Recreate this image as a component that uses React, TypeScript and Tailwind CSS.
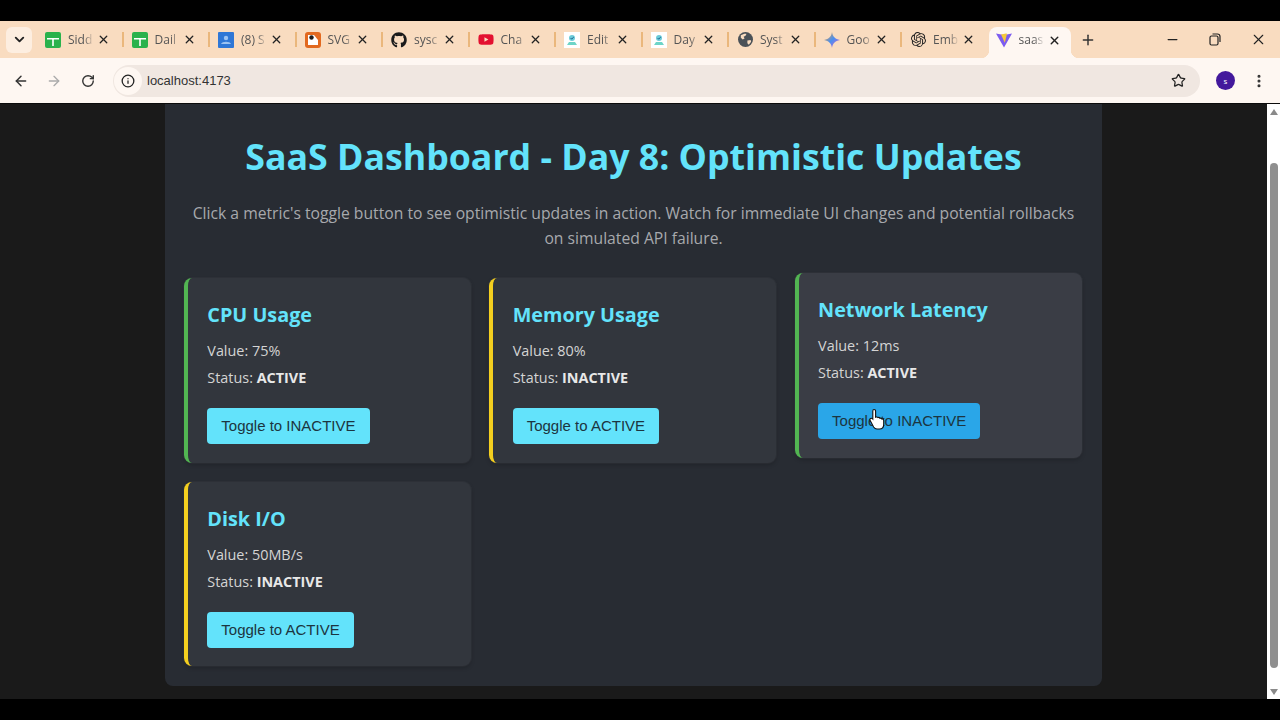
import {
  ArrowLeft,
  ArrowRight,
  ChevronDown,
  Info,
  Minus,
  MoreVertical,
  Plus,
  RotateCw,
  Star,
  X,
} from "lucide-react";
import { FaGithub, FaYoutube } from "react-icons/fa";
import { SiOpenai } from "react-icons/si";
import type { ReactNode } from "react";

function Sheets() {
  return (
    <svg width="16" height="16" viewBox="0 0 16 16">
      <rect width="16" height="16" rx="2" fill="#2ab24c" />
      <path d="M2 6h12v1.6H8.8V14H7.2V7.6H2z" fill="#fff" />
    </svg>
  );
}

function Blue() {
  return (
    <svg width="16" height="16" viewBox="0 0 16 16">
      <rect width="16" height="16" rx="1" fill="#2f77d6" />
      <circle cx="8" cy="6" r="2.2" fill="#9cc3f2" />
      <path d="M3 12c1-3 9-3 10 0z" fill="#9cc3f2" />
    </svg>
  );
}

function Svgo() {
  return (
    <svg width="16" height="16" viewBox="0 0 16 16">
      <rect width="16" height="16" rx="3" fill="#e2691f" />
      <path d="M3 3h6l4 5v5H3z" fill="#fff" />
      <circle cx="6.5" cy="5.5" r="2.2" fill="#1d1d1d" />
    </svg>
  );
}

function Doc() {
  return (
    <svg width="16" height="16" viewBox="0 0 16 16">
      <rect width="16" height="16" fill="#fff" />
      <circle cx="8" cy="6" r="3" fill="#6ccbd8" />
      <path d="M6.6 6l1.1 1.1L9.8 5" stroke="#1f5f8f" strokeWidth="1" fill="none" />
      <path d="M3 13l2-3h6l2 3z" fill="#6ed5c8" />
    </svg>
  );
}

function Earth() {
  return (
    <svg width="15" height="15" viewBox="0 0 16 16">
      <circle cx="8" cy="8" r="8" fill="#4b5157" />
      <path d="M3 3.5c2-1.5 5-2 6-1.5l-1 2-2 1 1 2-2 1-2-2zM10 9l3.5-.5.5 2-2.5 3-1.5-1.5z" fill="#f9dcc0" />
    </svg>
  );
}

function Gemini() {
  return (
    <svg width="16" height="16" viewBox="0 0 16 16">
      <defs>
        <linearGradient id="gem" x1="0" y1="0" x2="1" y2="1">
          <stop offset="0" stopColor="#f0a030" />
          <stop offset="0.5" stopColor="#4a8ff0" />
          <stop offset="1" stopColor="#d85ad0" />
        </linearGradient>
      </defs>
      <path d="M8 0c.6 4.4 3 7.2 8 8-5 .8-7.4 3.6-8 8-.6-4.4-3-7.2-8-8 5-.8 7.4-3.6 8-8z" fill="url(#gem)" />
    </svg>
  );
}

function Vite() {
  return (
    <svg width="16" height="16" viewBox="0 0 16 16">
      <path d="M0 1.5l8 1.4 8-1.4L8 15.5z" fill="#7c5cf0" />
      <path d="M5 2.5l5-.9 1 .2-2.2 9z" fill="#f5c83a" />
    </svg>
  );
}

function Restore() {
  return (
    <svg width="12" height="13" viewBox="0 0 12 13" fill="none" stroke="#222" strokeWidth="1.2">
      <rect x="1" y="3" width="8" height="9" rx="1.5" />
      <path d="M3.5 1h5A2.5 2.5 0 0 1 11 3.5V9" />
    </svg>
  );
}

const tabs: { icon: ReactNode; label: string }[] = [
  { icon: <Sheets />, label: "Sidd" },
  { icon: <Sheets />, label: "Dail" },
  { icon: <Blue />, label: "(8) S" },
  { icon: <Svgo />, label: "SVG" },
  { icon: <FaGithub size={16} color="#1b1b1b" />, label: "sysc" },
  { icon: <FaYoutube size={17} color="#e3102f" />, label: "Cha" },
  { icon: <Doc />, label: "Edit" },
  { icon: <Doc />, label: "Day" },
  { icon: <Earth />, label: "Syst" },
  { icon: <Gemini />, label: "Goo" },
  { icon: <SiOpenai size={15} color="#222" />, label: "Emb" },
];

const metrics = [
  { name: "CPU Usage", value: "75%", status: "ACTIVE", next: "INACTIVE" },
  { name: "Memory Usage", value: "80%", status: "INACTIVE", next: "ACTIVE" },
  { name: "Network Latency", value: "12ms", status: "ACTIVE", next: "INACTIVE", hover: true },
  { name: "Disk I/O", value: "50MB/s", status: "INACTIVE", next: "ACTIVE" },
];

function Tab({ icon, label, last }: { icon: ReactNode; label: string; last: boolean }) {
  return (
    <div className="flex h-[37px] w-[86.5px] shrink-0 items-center pl-2">
      <div className="flex w-4 shrink-0 justify-center">{icon}</div>
      <span className="ml-[7px] w-[26px] shrink-0 whitespace-nowrap text-[12px] text-[#555] [mask-image:linear-gradient(to_right,black_60%,transparent)]">
        {label}
      </span>
      <X size={13} strokeWidth={2.4} className="ml-[2.5px] shrink-0 text-[#222]" />
      {!last && <div className="ml-[12px] h-[15px] w-[2px] shrink-0 bg-[#eab77c]" />}
    </div>
  );
}

function MetricCard({ metric }: { metric: (typeof metrics)[number] }) {
  const active = metric.status === "ACTIVE";
  return (
    <div
      className={`rounded-lg border-l-[4px] pb-[18.4px] pl-[19.3px] pr-[19px] pt-[20px] shadow-[0_0_0_1px_rgba(255,255,255,0.03),0_2px_4px_rgba(0,0,0,0.2)] ${
        active ? "border-[#52b552]" : "border-[#f4cf1f]"
      } ${metric.hover ? "-translate-y-[5px] bg-[#3a3d45]" : "bg-[#32363d]"}`}
    >
      <h3 className="text-[19.8px] font-bold leading-[33px] text-[#63e3fb]">{metric.name}</h3>
      <p className="mt-[8px] text-[14.4px] leading-[23px] text-[#d4d4d4]">Value: {metric.value}</p>
      <p className="mt-[4px] text-[14.4px] leading-[23px] text-[#d4d4d4]">
        Status: <strong className="font-bold text-[#e8e8e8]">{metric.status}</strong>
      </p>
      <button
        className={`mt-[19px] block h-[36px] rounded px-[14px] font-['Liberation_Sans',sans-serif] text-[15px] text-[#1c3540] ${
          metric.hover ? "bg-[#2aa6e8]" : "bg-[#63e3fb]"
        }`}
      >
        Toggle to {metric.next}
      </button>
    </div>
  );
}

export default function App() {
  return (
    <div className="flex h-[720px] w-[1280px] flex-col overflow-hidden bg-black font-['Open_Sans',sans-serif]">
      <div className="mt-[21px] flex h-[37px] shrink-0 items-center bg-[#f9dcc0]">
        <div className="ml-[6px] mr-[5px] flex h-[26px] w-[26px] items-center justify-center rounded-md bg-[#fdeee0]">
          <ChevronDown size={15} strokeWidth={3} className="text-[#222]" />
        </div>
        {tabs.map((tab, i) => (
          <Tab key={i} icon={tab.icon} label={tab.label} last={i === tabs.length - 1} />
        ))}
        <div className="relative flex h-[31px] w-[82px] shrink-0 items-center self-end rounded-t-lg bg-[#fef7f2] pb-[5px] pl-[7px]">
          <div className="absolute -left-2 bottom-0 h-2 w-2 bg-[radial-gradient(circle_at_0_0,transparent_8px,#fef7f2_8.5px)]" />
          <div className="absolute -right-2 bottom-0 h-2 w-2 bg-[radial-gradient(circle_at_100%_0,transparent_8px,#fef7f2_8.5px)]" />
          <Vite />
          <span className="ml-[7px] w-[26px] whitespace-nowrap text-[12px] text-[#555] [mask-image:linear-gradient(to_right,black_55%,transparent)]">
            saas
          </span>
          <X size={13} strokeWidth={2.6} className="ml-[3px] text-[#222]" />
        </div>
        <Plus size={16} strokeWidth={2.2} className="ml-[9px] text-[#333]" />
        <Minus size={15} className="ml-[69px] text-[#222]" />
        <div className="ml-[29px]">
          <Restore />
        </div>
        <X size={17} strokeWidth={1.6} className="ml-[29px] text-[#222]" />
      </div>

      <div className="flex h-[45px] shrink-0 items-center bg-[#fef7f2]">
        <ArrowLeft size={16} strokeWidth={2.2} className="ml-[13px] text-[#333]" />
        <ArrowRight size={16} strokeWidth={2} className="ml-[17px] text-[#aaa]" />
        <RotateCw size={14} strokeWidth={2.4} className="ml-[19px] text-[#333]" />
        <div className="ml-[18px] flex h-[32px] w-[1087px] items-center rounded-full bg-[#f0e7e1]">
          <div className="ml-[1px] flex h-[28px] w-[28px] items-center justify-center rounded-full bg-[#fef7f2]">
            <Info size={14} strokeWidth={2.2} className="text-[#222]" />
          </div>
          <span className="ml-[5px] font-['Liberation_Sans',sans-serif] text-[13px] text-[#333]">localhost:4173</span>
          <Star size={15} strokeWidth={2} className="ml-auto mr-[14px] text-[#222]" />
        </div>
        <div className="ml-[16px] flex h-[19px] w-[19px] items-center justify-center rounded-full bg-[#43189c] text-[8px] text-white">
          s
        </div>
        <MoreVertical size={16} strokeWidth={2.6} className="ml-[16px] text-[#333]" />
      </div>

      <div className="flex h-[596px] shrink-0 border-t border-[#0c0c0c] bg-[#1a1a1a]">
        <div className="relative min-w-0 flex-1">
          <div className="mx-auto h-[582px] w-[937px] rounded-b-lg bg-[#282c33] px-[19px]">
            <h1 className="pt-[27px] text-center text-[35.7px] font-bold leading-[50px] text-[#63e3fb]">
              SaaS Dashboard - Day 8: Optimistic Updates
            </h1>
            <p className="mx-auto mt-[20px] w-[899px] text-center text-[15.7px] leading-[25.2px] text-[#a7a9ad]">
              Click a metric&apos;s toggle button to see optimistic updates in action. Watch for immediate UI changes and potential rollbacks on simulated API failure.
            </p>
            <div className="mt-[27px] grid grid-cols-[repeat(3,287px)] gap-x-[18.4px] gap-y-[19.2px]">
              {metrics.map((m) => (
                <MetricCard key={m.name} metric={m} />
              ))}
            </div>
          </div>
          {/* mouse pointer over the hovered button */}
          <svg className="absolute left-[869px] top-[304px]" width="17" height="22" viewBox="0 0 17 22">
            <path
              d="M5 1.5c1 0 1.6.7 1.6 1.7v6l.8-.2c.8-.2 1.4.2 1.7.6.7-.3 1.5 0 1.8.6.8-.3 1.6.1 1.9.8.9-.2 1.9.4 1.9 1.6v3.6c0 2.6-1.6 4.8-4.2 4.8H8c-1.6 0-2.6-.8-3.4-2L1.2 12.6c-.5-.8-.3-1.7.4-2.1.7-.4 1.4-.2 2 .4l.2.2V3.2c0-1 .4-1.7 1.2-1.7z"
              fill="#fff"
              stroke="#111"
              strokeWidth="1.1"
            />
          </svg>
        </div>
        <div className="flex w-[13px] shrink-0 flex-col items-center bg-white">
          <div className="mt-[5px] h-0 w-0 border-x-[4.5px] border-b-[6px] border-x-transparent border-b-[#8a8a8a]" />
          <div className="mt-[48px] h-[505px] w-[8px] rounded-full bg-[#8f8f8f]" />
          <div className="mt-[21px] h-0 w-0 border-x-[4.5px] border-t-[6px] border-x-transparent border-t-[#8a8a8a]" />
        </div>
      </div>
    </div>
  );
}
